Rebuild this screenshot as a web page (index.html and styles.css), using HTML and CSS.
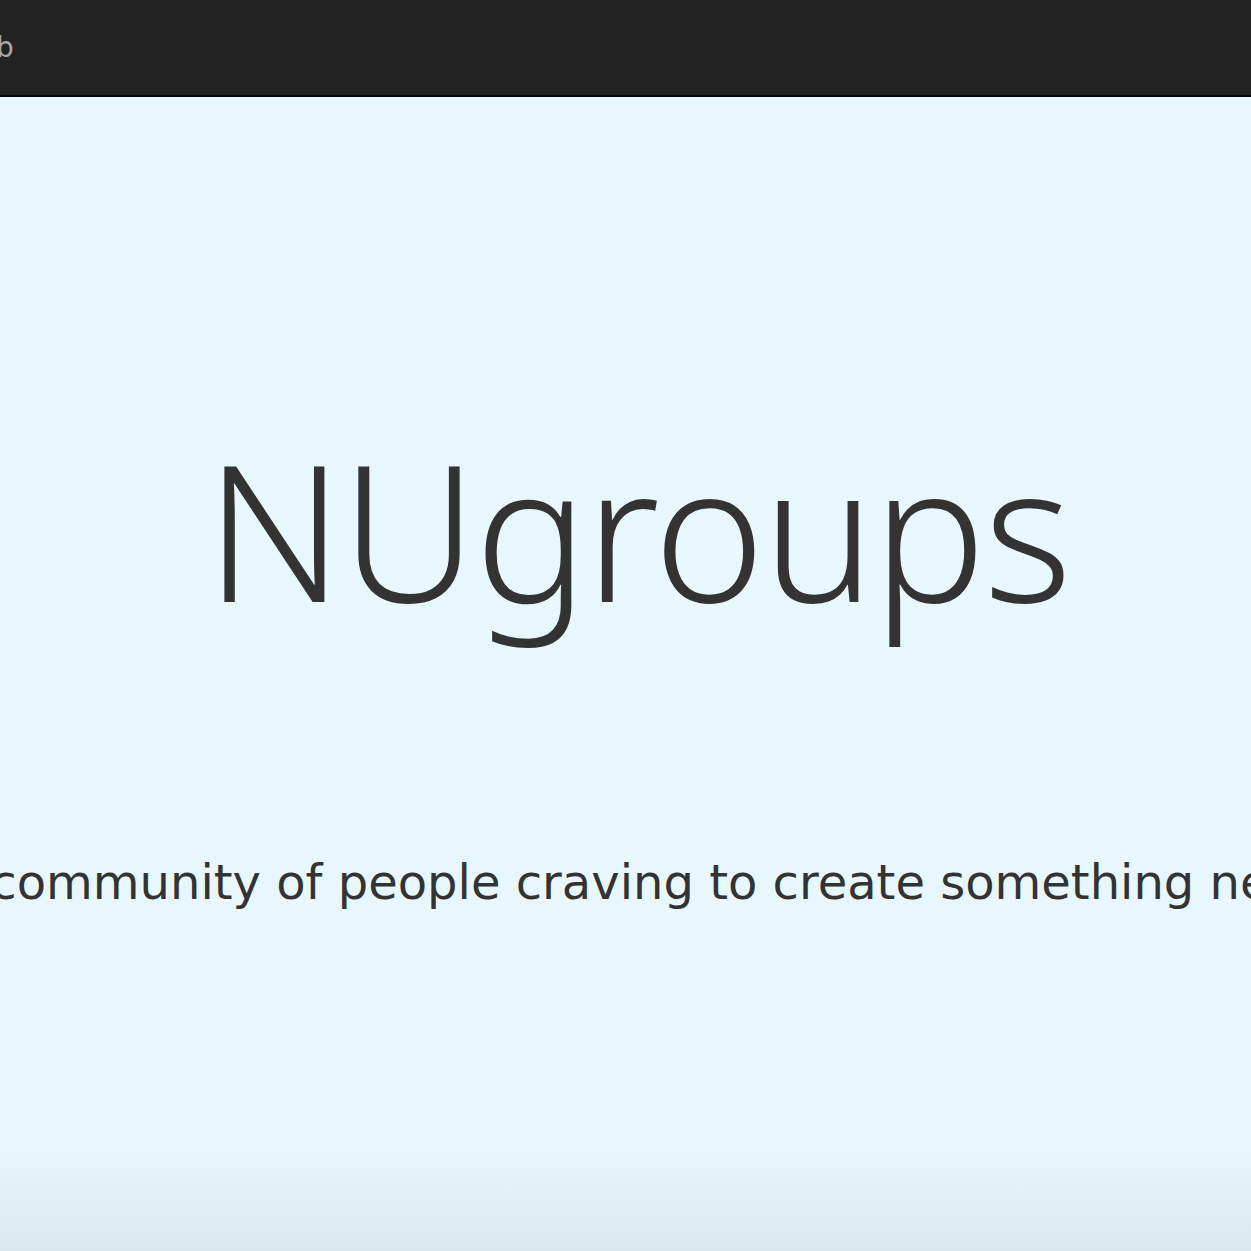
FILE: index.html
```html
<!DOCTYPE html>
<html lang="en">
<head>
<meta charset="utf-8">
<title>NUgroups</title>
<link rel="stylesheet" href="styles.css">
</head>
<body>
<header class="topbar">
  <span class="brand">b</span>
</header>
<main class="hero">
  <h1 class="title">NUgroups</h1>
  <div class="tagline-row">
    <p class="tagline">A community of people craving to create something new</p>
  </div>
</main>
</body>
</html>
```

FILE: styles.css
```css
html, body {
  margin: 0;
  padding: 0;
}
body {
  width: 1251px;
  height: 1251px;
  overflow: hidden;
  background: linear-gradient(to bottom, #e9f8fe 0px, #e8f7fd 1150px, #dbe8ee 1251px);
  font-family: "DejaVu Sans", sans-serif;
  color: #333333;
}
.topbar {
  height: 95px;
  background: #222222;
  border-bottom: 2px solid #050505;
  display: flex;
  align-items: center;
}
.brand {
  font-family: "DejaVu Sans", sans-serif;
  font-size: 28px;
  color: #a9a9a9;
  margin-left: -4px;
}
.hero {
  display: flex;
  flex-direction: column;
  align-items: center;
}
.title {
  margin: 0;
  padding-top: 312px;
  padding-left: 24px;
  font-family: "Noto Sans", sans-serif;
  font-weight: 300;
  font-size: 189px;
  line-height: 240px;
  color: #333333;
  letter-spacing: -2.5px;
}
.tagline-row {
  width: 1251px;
  display: flex;
  justify-content: center;
  margin-top: 203px;
}
.tagline {
  margin: 0;
  flex: none;
  white-space: nowrap;
  font-size: 48px;
  line-height: 60px;
  color: #333333;
}
```
